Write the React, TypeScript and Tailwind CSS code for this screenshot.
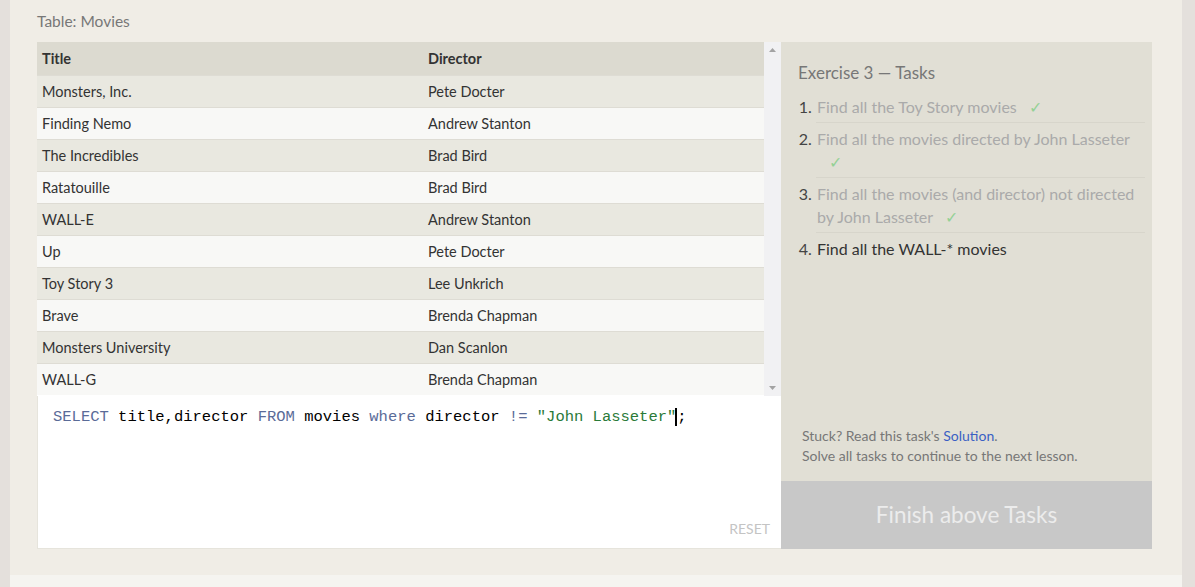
import React from 'react';

const ROWS: [string, string][] = [
  ['Monsters, Inc.', 'Pete Docter'],
  ['Finding Nemo', 'Andrew Stanton'],
  ['The Incredibles', 'Brad Bird'],
  ['Ratatouille', 'Brad Bird'],
  ['WALL-E', 'Andrew Stanton'],
  ['Up', 'Pete Docter'],
  ['Toy Story 3', 'Lee Unkrich'],
  ['Brave', 'Brenda Chapman'],
  ['Monsters University', 'Dan Scanlon'],
  ['WALL-G', 'Brenda Chapman'],
];

const TASKS = [
  { text: 'Find all the Toy Story movies', done: true },
  { text: 'Find all the movies directed by John Lasseter', done: true },
  { text: 'Find all the movies (and director) not directed by John Lasseter', done: true },
  { text: 'Find all the WALL-* movies', done: false },
];

const Check = () => <span className="inline-block ml-[12px] text-[#95d195]">✓</span>;

export default function App() {
  return (
    <div
      className="w-[1195px] h-[587px] flex bg-[#e4e0dc] overflow-hidden"
      style={{ fontFamily: 'Lato, "Noto Sans", sans-serif' }}
    >
      <div className="ml-[10px] w-[1172px] flex flex-col">
        <div className="h-[575px] bg-[#f0ede6] pl-[27px] pt-[11px]">
          <div className="text-[15.5px] text-[#777] leading-[20px]">Table: Movies</div>
          <div className="mt-[11px] flex w-[1116px] h-[507px]">
            {/* left: table + editor */}
            <div className="w-[744px] flex flex-col">
              <div className="flex h-[354px] bg-white">
                <div className="flex-1 text-[14.5px] text-[#333]">
                  <div className="flex h-[33px] items-center bg-[#dcdad0] font-bold">
                    <div className="w-[386px] pl-[5px]">Title</div>
                    <div className="pl-[5px]">Director</div>
                  </div>
                  {ROWS.map((r, i) => (
                    <div
                      key={i}
                      className={
                        'flex h-[32px] items-center border-t border-[#dedcd4] ' +
                        (i % 2 === 0 ? 'bg-[#e9e8e0]' : 'bg-[#f8f8f6]')
                      }
                    >
                      <div className="w-[386px] pl-[5px]">{r[0]}</div>
                      <div className="pl-[5px]">{r[1]}</div>
                    </div>
                  ))}
                </div>
                <div className="w-[17px] bg-[#f1f1f3] flex flex-col justify-between items-center py-[6px]">
                  <svg width="7" height="4" viewBox="0 0 7 4">
                    <path d="M3.5 0L7 4H0z" fill="#a3a3a3" />
                  </svg>
                  <svg width="7" height="4" viewBox="0 0 7 4">
                    <path d="M0 0h7L3.5 4z" fill="#a3a3a3" />
                  </svg>
                </div>
              </div>
              <div className="flex-1 bg-white border-l border-b border-[#e6e4dc] relative">
                <div
                  className="pl-[15px] pt-[10px] text-[15.5px] leading-[22px] text-black whitespace-pre"
                  style={{ fontFamily: '"Liberation Mono", monospace' }}
                >
                  <span className="text-[#5a6b98]">SELECT</span> title,director{' '}
                  <span className="text-[#5a6b98]">FROM</span> movies{' '}
                  <span className="text-[#5a6b98]">where</span> director{' '}
                  <span className="text-[#5a6b98]">!=</span>{' '}
                  <span className="text-[#2a7a38]">"John Lasseter"</span>
                  <span className="border-l-2 border-black -ml-[1px]">;</span>
                </div>
                <div className="absolute right-[11px] bottom-[9px] text-[14px] text-[#c4c4c4]">RESET</div>
              </div>
            </div>
            {/* right: tasks */}
            <div className="w-[371px] bg-[#e1dfd5] flex flex-col">
              <div className="flex-1 pl-[17px] pr-[7px] pt-[20px]">
                <div className="text-[17px] text-[#777] leading-[22px]">Exercise 3 — Tasks</div>
                <ol className="mt-[7px] ml-[18px] list-decimal text-[16px] leading-[23px] marker:text-[#444]">
                  {TASKS.map((t, i) => (
                    <li
                      key={i}
                      className={
                        'pl-[1px] py-[4px] ' +
                        (i < TASKS.length - 1 ? 'border-b border-[#d7d5cb] ' : '') +
                        (t.done ? 'text-[#aaa]' : 'text-[#333]')
                      }
                    >
                      {t.text}
                      {t.done && <Check />}
                    </li>
                  ))}
                </ol>
              </div>
              <div className="pl-[21px] pb-[15px] text-[14px] leading-[20px] text-[#777]">
                <div>
                  Stuck? Read this task's <span className="text-[#3b5fc4]">Solution</span>.
                </div>
                <div>Solve all tasks to continue to the next lesson.</div>
              </div>
              <div className="h-[68px] bg-[#c8c8c8] flex items-center justify-center text-[22.5px] text-[#ececec]">
                Finish above Tasks
              </div>
            </div>
          </div>
        </div>
        <div className="flex-1 bg-[#f5f4f0]" />
      </div>
    </div>
  );
}
